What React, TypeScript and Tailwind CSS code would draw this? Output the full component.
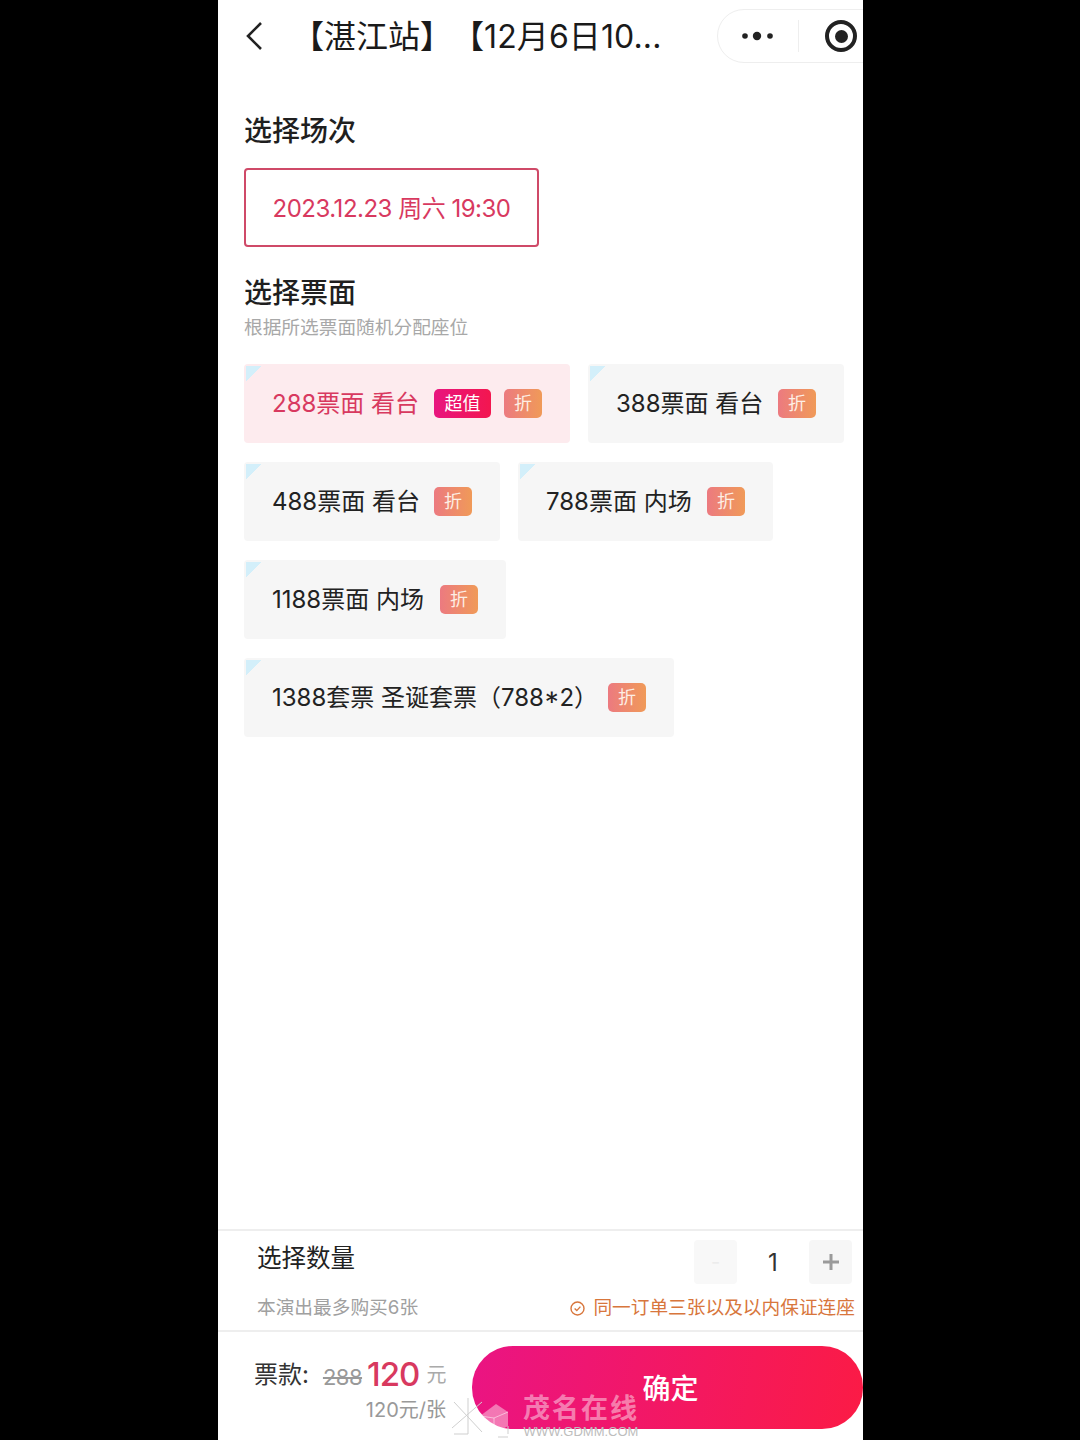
import React from "react";

const tickets = [
  { label: "288票面 看台", w: "w-[326px]", active: true, deal: true },
  { label: "388票面 看台", w: "w-[256px]" },
  { label: "488票面 看台", w: "w-[256px]" },
  { label: "788票面 内场", w: "w-[255px]" },
  { label: "1188票面 内场", w: "w-[262px]" },
  { label: "1388套票 圣诞套票（788*2）", w: "w-[430px]" },
];

const TicketCard = ({ label, w, active, deal }: { label: string; w: string; active?: boolean; deal?: boolean }) => {
  return (
    <div
      className={`relative flex h-[79px] items-center justify-between overflow-hidden rounded-[4px] pl-[28px] pr-[28px] ${w} ${
        active ? "bg-[#fdebee] text-[#d8395f]" : "bg-[#f6f6f6] text-[#222222]"
      }`}
    >
      {/* Corner mark */}
      <div className="absolute left-[2px] top-[2px] h-[16px] w-[16px] bg-[linear-gradient(135deg,#d3effa_50%,transparent_50%)]"></div>
      <span className="whitespace-nowrap text-[24px] leading-[30px]">{label}</span>
      <div className="flex items-center gap-[13px]">
        {deal && (
          <span className="flex h-[29px] w-[57px] items-center justify-center rounded-[5px] bg-[linear-gradient(90deg,#e8157f,#f3164f)] text-[18px] text-white">
            超值
          </span>
        )}
        <span className="flex h-[29px] w-[38px] items-center justify-center rounded-[5px] bg-[linear-gradient(90deg,#ec7a80,#f09a58)] text-[18px] text-[#fdeee4]">
          折
        </span>
      </div>
    </div>
  );
};

export default function App() {
  return (
    <div className="flex h-[1440px] w-[1080px] justify-center overflow-hidden bg-black font-['Inter','Noto_Sans_CJK_SC',sans-serif]">
      <div className="relative ml-[1px] flex h-full w-[645px] flex-col overflow-hidden bg-white">
        {/* Header */}
        <div className="flex h-[72px] items-center pl-[26px]">
          <svg width="20" height="32" viewBox="0 0 20 32" fill="none" stroke="#222" strokeWidth="2.6" className="shrink-0">
            <path d="M17 3 L4 16 L17 29" />
          </svg>
          <div className="ml-[28px] mt-[2px] w-[425px] shrink-0 whitespace-nowrap text-[32px] leading-[40px] text-[#1a1a1a] [text-spacing-trim:space-all]">
            <span className="font-medium">【</span>湛江站<span className="font-medium">】【</span>
            <span className="tracking-[0.1px]">12月6日10...</span>
          </div>
          <div className="flex h-[54px] w-[150px] shrink-0 items-center rounded-l-[27px] border border-[#eeeeee] pl-[22px]">
            <svg width="36" height="12" viewBox="0 0 36 12" fill="#222" className="shrink-0">
              <circle cx="5" cy="6" r="2.8" />
              <circle cx="17" cy="6" r="4.2" />
              <circle cx="30" cy="6" r="2.8" />
            </svg>
            <div className="ml-[22px] h-[32px] w-[1px] shrink-0 bg-[#eeeeee]"></div>
            <div className="ml-[26px] flex h-[32px] w-[32px] shrink-0 items-center justify-center rounded-full border-[4px] border-[#222222]">
              <div className="h-[13px] w-[13px] rounded-full bg-[#222222]"></div>
            </div>
          </div>
        </div>

        {/* Main */}
        <div className="flex-1 pl-[26px] pr-[18px]">
          <h2 className="mt-[39px] text-[28px] font-medium leading-[40px] text-[#1f1f1f]">选择场次</h2>
          <div className="mt-[17px] flex h-[79px] w-[295px] items-center justify-center rounded-[4px] border-2 border-[#cf4a68] pt-[2px] text-[24px] tracking-[-0.5px] text-[#d8395f]">
            2023.12.23 周六 19:30
          </div>
          <h2 className="mt-[26px] text-[28px] font-medium leading-[40px] text-[#1f1f1f]">选择票面</h2>
          <p className="mt-[2px] text-[18.7px] leading-[26px] text-[#a8a8a8]">根据所选票面随机分配座位</p>
          <div className="mt-[23px] flex flex-wrap gap-x-[18px] gap-y-[19px]">
            {tickets.map((t) => (
              <TicketCard key={t.label} {...t} />
            ))}
          </div>
        </div>

        {/* Quantity */}
        <div className="h-[103px] border-y-2 border-[#eeeeee] pl-[39px] pr-[8px]">
          <div className="flex h-[63px] items-start justify-between">
            <span className="mt-[9px] text-[24.5px] leading-[36px] text-[#222222]">选择数量</span>
            <div className="mr-[3px] mt-[9px] flex items-center">
              <div className="flex h-[44px] w-[43px] items-center justify-center rounded-[4px] bg-[#f8f8f8] text-[20px] leading-none text-[#ececec]">-</div>
              <span className="w-[72px] pt-[1px] text-center text-[24px] text-[#333333]">1</span>
              <div className="flex h-[44px] w-[43px] items-center justify-center rounded-[4px] bg-[#f6f6f6]">
                <svg width="18" height="18" viewBox="0 0 18 18" stroke="#9a9a9a" strokeWidth="3">
                  <path d="M9 1 V17 M1 9 H17" />
                </svg>
              </div>
            </div>
          </div>
          <div className="flex items-center justify-between">
            <span className="text-[18.7px] leading-[28px] text-[#a0a0a0]">本演出最多购买6张</span>
            <div className="flex items-center text-[#d8763c]">
              <svg width="15" height="15" viewBox="0 0 15 15" fill="none" stroke="currentColor" strokeWidth="1.4">
                <circle cx="7.5" cy="7.5" r="6.5" />
                <path d="M4.6 7.6 L6.8 9.6 L10.4 5.6" />
              </svg>
              <span className="ml-[8px] text-[18.7px] leading-[28px]">同一订单三张以及以内保证连座</span>
            </div>
          </div>
        </div>

        {/* Bottom bar */}
        <div className="flex h-[108px] items-start pl-[36px]">
          <div className="w-[218px] shrink-0 pr-[26px] pt-[24px]">
            <div className="flex h-[38px] items-center whitespace-nowrap">
              <span className="text-[24px] text-[#333333]">票款:</span>
              <span className="ml-[14px] mt-[5px] text-[22px] tracking-[-0.5px] text-[#999999] line-through">288</span>
              <span className="ml-[5px] text-[33px] font-medium tracking-[-1px] text-[#d8395f]">120</span>
              <span className="ml-[7px] text-[20px] text-[#aaaaaa]">元</span>
            </div>
            <div className="mt-[2px] text-right text-[20px] leading-[28px] text-[#999999]">120元/张</div>
          </div>
          <button className="mt-[14px] flex h-[83px] w-[391px] shrink-0 items-center justify-center rounded-[41px] bg-[linear-gradient(100deg,#ea1483,#fb1b45)] pl-[6px] pt-[2px] text-[28px] font-medium text-white">
            确定
          </button>
        </div>

        {/* Watermark */}
        <div className="absolute bottom-[2px] left-[234px] flex items-end text-white/60">
          <svg width="68" height="40" viewBox="8 0 68 40" fill="none">
            <path d="M10 4 L38 34 M38 4 L8 30 M24 0 V36 M24 36 H10" stroke="#cfcfcf" strokeWidth="1" />
            <path d="M36 18 L52 6 L64 14 L64 28 L50 36 L36 26 Z" fill="#ffffff" fillOpacity="0.42" />
            <path d="M50 36 V20 L64 14 M50 20 L36 18" stroke="#ffffff" strokeOpacity="0.5" strokeWidth="1" />
            <path d="M64 36 V28 M54 39 H64" stroke="#cfcfcf" strokeWidth="1" />
          </svg>
          <div className="ml-[3px] flex flex-col items-center">
            <span className="text-[27px] font-bold leading-[27px] tracking-[2px] text-white/45">茂名在线</span>
            <span className="mt-[3px] text-[13px] leading-[13px] text-[#bdbdbd] font-['Liberation_Sans',sans-serif]">WWW.GDMM.COM</span>
          </div>
        </div>
      </div>
    </div>
  );
}
